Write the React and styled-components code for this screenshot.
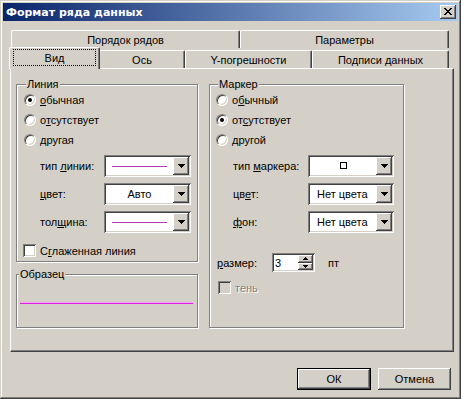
import styled, { createGlobalStyle } from 'styled-components';

const GlobalStyle = createGlobalStyle`
  html, body { margin: 0; padding: 0; background: #d4d0c8; }
  body { font-family: 'Liberation Sans', Arial, sans-serif; font-size: 11px; color: #000; }
  * { box-sizing: border-box; }
`;

const raised = `
  background: #d4d0c8;
  box-shadow: inset -1px -1px #404040, inset 1px 1px #fff, inset -2px -2px #808080, inset 2px 2px #d4d0c8;
`;

const sunken = `
  box-shadow: inset 1px 1px #808080, inset -1px -1px #fff, inset 2px 2px #404040, inset -2px -2px #d4d0c8;
`;

function DownArrow() {
  return (
    <svg width="7" height="4" viewBox="0 0 7 4" shapeRendering="crispEdges">
      <path d="M0 0h7v1H0z M1 1h5v1H1z M2 2h3v1H2z M3 3h1v1H3z" fill="#000" />
    </svg>
  );
}

function SpinArrow({ up }) {
  return (
    <svg width="5" height="3" viewBox="0 0 5 3" shapeRendering="crispEdges">
      {up
        ? <path d="M2 0h1v1H2z M1 1h3v1H1z M0 2h5v1H0z" fill="#000" />
        : <path d="M0 0h5v1H0z M1 1h3v1H1z M2 2h1v1H2z" fill="#000" />}
    </svg>
  );
}

function ComboBox({ width, children, align }) {
  return (
    <Combo w={width}>
      <ComboValue align={align}>{children}</ComboValue>
      <DropButton><DownArrow /></DropButton>
    </Combo>
  );
}

export default function App() {
  return (
    <>
      <GlobalStyle />
      <Window>
        <TitleBar>
          <Title>Формат ряда данных</Title>
          <CloseButton>
            <svg width="8" height="7" viewBox="0 0 8 7" shapeRendering="crispEdges">
              <path d="M0 0h2v1H0z M6 0h2v1H6z M1 1h2v1H1z M5 1h2v1H5z M2 2h4v1H2z M3 3h2v1H3z M2 4h4v1H2z M1 5h2v1H1z M5 5h2v1H5z M0 6h2v1H0z M6 6h2v1H6z" fill="#000" />
            </svg>
          </CloseButton>
        </TitleBar>

        <TabArea>
          <TabRow indent={1} h={18}>
            <Tab w={229}>Порядок рядов</Tab>
            <Tab w={209}>Параметры</Tab>
          </TabRow>
          <TabRow indent={0} h={20}>
            <Tab w={91} active><Focus>Вид</Focus></Tab>
            <Tab w={86}>Ось</Tab>
            <Tab w={127}>Y-погрешности</Tab>
            <Tab w={137}>Подписи данных</Tab>
          </TabRow>

          <Panel>
            <Column>
              <Group w={182} h={184} pad={7}>
                <Legend>Линия</Legend>
                <OptionRow><Radio checked /><span><u>о</u>бычная</span></OptionRow>
                <OptionRow><Radio /><span>о<u>т</u>сутствует</span></OptionRow>
                <OptionRow><Radio /><span>другая</span></OptionRow>
                <Fields>
                  <FieldRow indent={16}>
                    <FieldLabel w={64}>тип <u>л</u>инии:</FieldLabel>
                    <ComboBox width={87}><SampleLine color="#b23cb8" /></ComboBox>
                  </FieldRow>
                  <FieldRow indent={16}>
                    <FieldLabel w={64}><u>ц</u>вет:</FieldLabel>
                    <ComboBox width={87}>Авто</ComboBox>
                  </FieldRow>
                  <FieldRow indent={16}>
                    <FieldLabel w={64}>тол<u>щ</u>ина:</FieldLabel>
                    <ComboBox width={87}><SampleLine color="#b23cb8" /></ComboBox>
                  </FieldRow>
                </Fields>
                <CheckRow top={11} indent={-1}>
                  <CheckBox />
                  <span>С<u>г</u>лаженная линия</span>
                </CheckRow>
              </Group>

              <Group w={182} h={60} pad={0}>
                <Legend>Образец</Legend>
                <Preview />
              </Group>
            </Column>

            <Group w={195} h={250} pad={6}>
              <Legend>Маркер</Legend>
              <OptionRow><Radio /><span>о<u>б</u>ычный</span></OptionRow>
              <OptionRow><Radio checked /><span>от<u>с</u>утствует</span></OptionRow>
              <OptionRow><Radio /><span>другой</span></OptionRow>
              <Fields>
                <FieldRow indent={17}>
                  <FieldLabel w={75}>тип <u>м</u>аркера:</FieldLabel>
                  <ComboBox width={86}><MarkerSquare /></ComboBox>
                </FieldRow>
                <FieldRow indent={17}>
                  <FieldLabel w={75}>цв<u>е</u>т:</FieldLabel>
                  <ComboBox width={86} align="left">Нет цвета</ComboBox>
                </FieldRow>
                <FieldRow indent={17}>
                  <FieldLabel w={75}><u>ф</u>он:</FieldLabel>
                  <ComboBox width={86} align="left">Нет цвета</ComboBox>
                </FieldRow>
              </Fields>
              <SizeRow>
                <FieldLabel w={55}><u>р</u>азмер:</FieldLabel>
                <Spin>
                  <SpinValue>3</SpinValue>
                  <SpinButtons>
                    <SpinButton><SpinArrow up /></SpinButton>
                    <SpinButton><SpinArrow /></SpinButton>
                  </SpinButtons>
                </Spin>
                <Unit>пт</Unit>
              </SizeRow>
              <CheckRow top={9} indent={2}>
                <CheckBox disabled />
                <Disabled>тень</Disabled>
              </CheckRow>
            </Group>
          </Panel>
        </TabArea>

        <ButtonRow>
          <Button w={74} isDefault>ОК</Button>
          <Button w={73}>Отмена</Button>
        </ButtonRow>
      </Window>
    </>
  );
}

const Window = styled.div`
  width: 461px;
  height: 399px;
  padding: 3px;
  background: #d4d0c8;
  box-shadow: inset -1px -1px #404040, inset 1px 1px #d4d0c8, inset -2px -2px #808080, inset 2px 2px #fff;
  display: flex;
  flex-direction: column;
`;

const TitleBar = styled.div`
  height: 18px;
  display: flex;
  align-items: center;
  justify-content: space-between;
  padding: 0 2px 0 3px;
  background: linear-gradient(to right, #0a246a, #a6caf0);
`;

const Title = styled.span`
  font-family: 'DejaVu Sans', 'Liberation Sans', sans-serif;
  font-weight: bold;
  font-size: 11px;
  color: #fff;
`;

const CloseButton = styled.div`
  width: 16px;
  height: 14px;
  ${raised}
  display: flex;
  align-items: center;
  justify-content: center;
  padding-bottom: 1px;
`;

const TabArea = styled.div`
  margin: 9px 4px 0 7px;
  display: flex;
  flex-direction: column;
`;

const TabRow = styled.div`
  display: flex;
  align-items: flex-end;
  height: ${(p) => p.h}px;
  padding-left: ${(p) => p.indent}px;
`;

const Tab = styled.div`
  position: relative;
  z-index: ${(p) => (p.active ? 2 : 1)};
  width: ${(p) => p.w}px;
  height: ${(p) => (p.active ? 22 : 18)}px;
  margin: ${(p) => (p.active ? '0 -1px -1px -1px' : '0')};
  background: #d4d0c8;
  border-top: 1px solid #fff;
  border-left: 1px solid #fff;
  border-right: 1px solid #404040;
  box-shadow: inset -1px 0 #808080;
  border-top-left-radius: 2px;
  border-top-right-radius: 2px;
  display: flex;
  align-items: center;
  justify-content: center;
  padding: ${(p) => (p.active ? '1px 3px 3px 3px' : '0')};
`;

const Focus = styled.div`
  align-self: stretch;
  flex: 1;
  display: flex;
  align-items: center;
  justify-content: center;
  border: 1px dotted #000;
`;

const Panel = styled.div`
  position: relative;
  z-index: 1;
  height: 284px;
  border-top: 1px solid #fff;
  border-left: 1px solid #fff;
  border-right: 1px solid #404040;
  border-bottom: 1px solid #404040;
  box-shadow: inset -1px -1px #808080;
  padding: 9px 5px 0 5px;
  display: flex;
  align-items: flex-start;
  gap: 11px;
`;

const Column = styled.div`
  display: flex;
  flex-direction: column;
  gap: 6px;
`;

const Group = styled.fieldset`
  margin: 0;
  padding: 0 0 0 ${(p) => p.pad}px;
  min-width: 0;
  width: ${(p) => p.w}px;
  height: ${(p) => p.h}px;
  border: 1px solid #808080;
  box-shadow: inset 1px 1px #fff, 1px 1px #fff;
  display: flex;
  flex-direction: column;
`;

const Legend = styled.legend`
  margin-left: 2px;
  padding: 0 1px;
  height: 12px;
  line-height: 12px;
  background: #d4d0c8;
`;

const OptionRow = styled.div`
  height: 20px;
  display: flex;
  align-items: center;
  gap: 4px;
`;

const Radio = styled.span`
  position: relative;
  width: 12px;
  height: 12px;
  border-radius: 50%;
  background: #fff;
  border: 1px solid;
  border-color: #808080 #fff #fff #808080;
  box-shadow: inset 1px 1px #404040, inset -1px -1px #d4d0c8;
  flex-shrink: 0;
  &::after {
    content: '';
    display: ${(p) => (p.checked ? 'block' : 'none')};
    position: absolute;
    left: 3px;
    top: 3px;
    width: 4px;
    height: 4px;
    border-radius: 50%;
    background: #000;
  }
`;

const Fields = styled.div`
  margin-top: 5px;
  display: flex;
  flex-direction: column;
  gap: 6px;
`;

const FieldRow = styled.div`
  display: flex;
  align-items: center;
  height: 22px;
  margin-left: ${(p) => p.indent}px;
`;

const FieldLabel = styled.span`
  width: ${(p) => p.w}px;
  flex-shrink: 0;
`;

const Combo = styled.div`
  width: ${(p) => p.w}px;
  height: 22px;
  padding: 2px;
  background: #fff;
  ${sunken}
  display: flex;
`;

const ComboValue = styled.div`
  flex: 1;
  display: flex;
  align-items: center;
  justify-content: ${(p) => (p.align === 'left' ? 'flex-start' : 'center')};
  padding: ${(p) => (p.align === 'left' ? '0 0 0 7px' : '0 6px')};
`;

const DropButton = styled.div`
  width: 16px;
  height: 18px;
  ${raised}
  display: flex;
  align-items: center;
  justify-content: center;
`;

const SampleLine = styled.div`
  flex: 1;
  height: 1px;
  background: ${(p) => p.color};
`;

const Preview = styled.div`
  flex-shrink: 0;
  height: 2px;
  margin: 22px 4px 0 3px;
  border-top: 1px solid #f0a6f0;
  border-bottom: 1px solid #e020e0;
`;

const MarkerSquare = styled.div`
  width: 7px;
  height: 7px;
  border: 1px solid #000;
  margin-top: -1px;
`;

const CheckRow = styled.div`
  display: flex;
  align-items: center;
  gap: 4px;
  height: 13px;
  margin-top: ${(p) => p.top}px;
  margin-left: ${(p) => p.indent}px;
`;

const CheckBox = styled.span`
  width: 13px;
  height: 13px;
  flex-shrink: 0;
  background: ${(p) => (p.disabled ? '#d4d0c8' : '#fff')};
  ${sunken}
`;

const Disabled = styled.span`
  color: #808080;
  text-shadow: 1px 1px #fff;
`;

const SizeRow = styled.div`
  display: flex;
  align-items: center;
  margin-top: 20px;
  margin-left: 1px;
  height: 19px;
`;

const Spin = styled.div`
  width: 43px;
  height: 19px;
  padding: 2px;
  background: #fff;
  ${sunken}
  display: flex;
`;

const SpinValue = styled.div`
  flex: 1;
  padding-left: 1px;
  display: flex;
  align-items: center;
`;

const SpinButtons = styled.div`
  width: 15px;
  display: flex;
  flex-direction: column;
`;

const SpinButton = styled.div`
  flex: 1;
  ${raised}
  display: flex;
  align-items: center;
  justify-content: center;
`;

const Unit = styled.span`
  margin-left: 13px;
`;

const ButtonRow = styled.div`
  display: flex;
  justify-content: flex-end;
  gap: 7px;
  margin: 16px 7px 0 0;
`;

const Button = styled.div`
  width: ${(p) => p.w}px;
  height: 22px;
  display: flex;
  align-items: center;
  justify-content: center;
  ${raised}
  ${(p) => p.isDefault && `
    border: 1px solid #000;
  `}
`;
